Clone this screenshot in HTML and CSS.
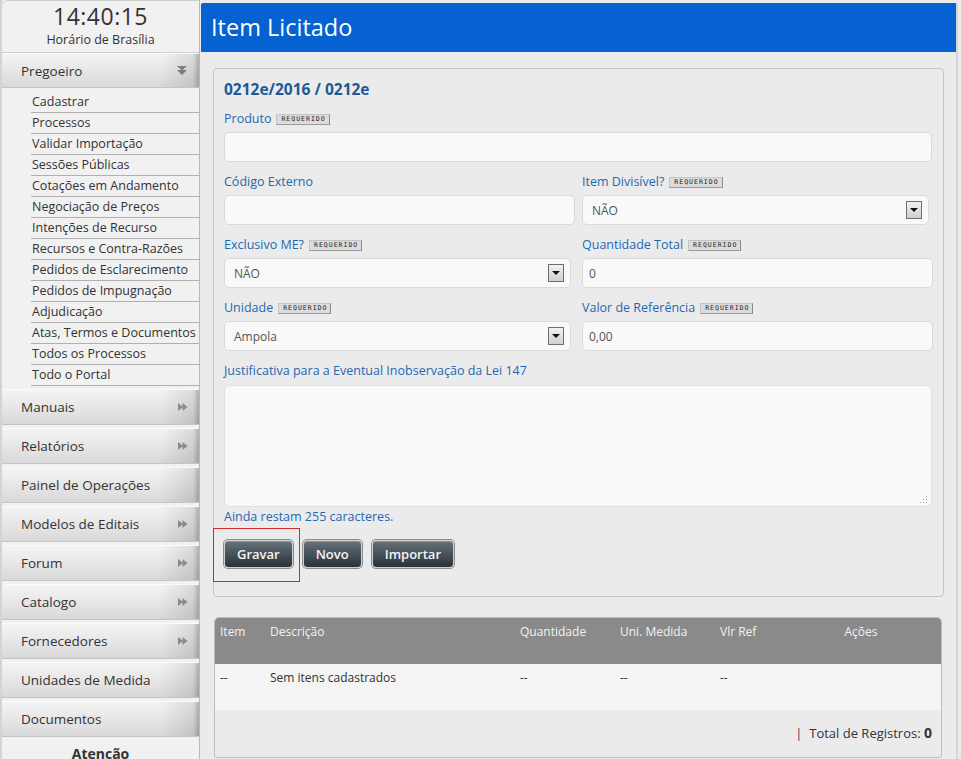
FILE: index.html
```html
<!DOCTYPE html>
<html lang="pt-BR">
<head>
<meta charset="utf-8">
<title>Item Licitado</title>
<link rel="stylesheet" href="styles.css">
</head>
<body>
<div class="page">
  <aside class="sidebar">
    <div class="clock">
      <div class="time">14:40:15</div>
      <div class="zone">Horário de Brasília</div>
    </div>
    <div class="menu-item open">
      <span>Pregoeiro</span>
      <svg class="ico" width="12" height="11" viewBox="0 0 12 11"><path d="M1 1h10L6 5.5z M1 5h10L6 10z" fill="#7d7d7d"/></svg>
    </div>
    <ul class="submenu">
      <li>Cadastrar</li>
      <li>Processos</li>
      <li>Validar Importação</li>
      <li>Sessões Públicas</li>
      <li>Cotações em Andamento</li>
      <li>Negociação de Preços</li>
      <li>Intenções de Recurso</li>
      <li>Recursos e Contra-Razões</li>
      <li>Pedidos de Esclarecimento</li>
      <li>Pedidos de Impugnação</li>
      <li>Adjudicação</li>
      <li>Atas, Termos e Documentos</li>
      <li>Todos os Processos</li>
      <li>Todo o Portal</li>
    </ul>
    <div class="menu-item"><span>Manuais</span><svg class="ico" width="11" height="10" viewBox="0 0 11 10"><path d="M1 1v8l5-4z M5.5 1v8l5-4z" fill="#8a8a8a"/></svg></div>
    <div class="menu-item"><span>Relatórios</span><svg class="ico" width="11" height="10" viewBox="0 0 11 10"><path d="M1 1v8l5-4z M5.5 1v8l5-4z" fill="#8a8a8a"/></svg></div>
    <div class="menu-item"><span>Painel de Operações</span></div>
    <div class="menu-item"><span>Modelos de Editais</span><svg class="ico" width="11" height="10" viewBox="0 0 11 10"><path d="M1 1v8l5-4z M5.5 1v8l5-4z" fill="#8a8a8a"/></svg></div>
    <div class="menu-item"><span>Forum</span><svg class="ico" width="11" height="10" viewBox="0 0 11 10"><path d="M1 1v8l5-4z M5.5 1v8l5-4z" fill="#8a8a8a"/></svg></div>
    <div class="menu-item"><span>Catalogo</span><svg class="ico" width="11" height="10" viewBox="0 0 11 10"><path d="M1 1v8l5-4z M5.5 1v8l5-4z" fill="#8a8a8a"/></svg></div>
    <div class="menu-item"><span>Fornecedores</span><svg class="ico" width="11" height="10" viewBox="0 0 11 10"><path d="M1 1v8l5-4z M5.5 1v8l5-4z" fill="#8a8a8a"/></svg></div>
    <div class="menu-item"><span>Unidades de Medida</span></div>
    <div class="menu-item"><span>Documentos</span></div>
    <div class="attention">Atenção</div>
  </aside>

  <main class="main">
    <header class="title-bar"><h1>Item Licitado</h1></header>

    <section class="panel form-panel">
      <h2 class="proc">0212e/2016 / 0212e</h2>

      <div class="field first">
        <label>Produto <span class="req">REQUERIDO</span></label>
        <div class="input"></div>
      </div>

      <div class="row">
        <div class="field">
          <label>Código Externo</label>
          <div class="input"></div>
        </div>
        <div class="field">
          <label>Item Divisível? <span class="req">REQUERIDO</span></label>
          <div class="select"><span>NÃO</span><i class="arrow"></i></div>
        </div>
      </div>

      <div class="row">
        <div class="field">
          <label>Exclusivo ME? <span class="req">REQUERIDO</span></label>
          <div class="select"><span>NÃO</span><i class="arrow"></i></div>
        </div>
        <div class="field">
          <label>Quantidade Total <span class="req">REQUERIDO</span></label>
          <div class="input"><span>0</span></div>
        </div>
      </div>

      <div class="row">
        <div class="field">
          <label>Unidade <span class="req">REQUERIDO</span></label>
          <div class="select"><span>Ampola</span><i class="arrow"></i></div>
        </div>
        <div class="field">
          <label>Valor de Referência <span class="req">REQUERIDO</span></label>
          <div class="input"><span>0,00</span></div>
        </div>
      </div>

      <div class="field just">
        <label>Justificativa para a Eventual Inobservação da Lei 147</label>
        <div class="textarea"><i class="grip"></i></div>
      </div>
      <div class="remaining">Ainda restam 255 caracteres.</div>

      <div class="buttons">
        <button class="btn">Gravar</button>
        <button class="btn">Novo</button>
        <button class="btn">Importar</button>
        <div class="focus-mark"></div>
      </div>
    </section>

    <section class="table-panel">
      <div class="trow thead">
        <div class="c1">Item</div><div class="c2">Descrição</div><div class="c3">Quantidade</div><div class="c4">Uni. Medida</div><div class="c5">Vlr Ref</div><div class="c6">Ações</div>
      </div>
      <div class="trow tbody">
        <div class="c1">--</div><div class="c2">Sem itens cadastrados</div><div class="c3">--</div><div class="c4">--</div><div class="c5">--</div><div class="c6"></div>
      </div>
      <div class="tfoot"><span class="sep">|</span> &nbsp;Total de Registros: <b>0</b></div>
    </section>
  </main>
</div>
</body>
</html>
```

FILE: styles.css
```css
* { box-sizing: border-box; }
html, body { margin: 0; padding: 0; }
body {
  background: #ebebeb;
  font-family: "Open Sans", "Noto Sans", sans-serif;
  color: #333;
  height: 759px;
  overflow: hidden;
}
.page {
  display: flex;
  align-items: flex-start;
  height: 759px;
  border-left: 2px solid #d4d4d4;
}

/* sidebar */
.sidebar {
  width: 198px;
  flex: none;
  background: #f1f1f1;
  border-right: 1px solid #b9b9b9;
  min-height: 759px;
  border-top-left-radius: 6px;
  box-shadow: inset 0 1px 0 #d0d0d0;
}
.clock {
  height: 53px;
  text-align: center;
  padding-top: 2px;
  border-bottom: 1px solid #cfcfcf;
}
.clock .time { font-size: 23px; line-height: 29px; color: #333; letter-spacing: 0.5px; }
.clock .zone { font-size: 12.5px; line-height: 18px; color: #333; }

.menu-item {
  height: 36px;
  display: flex;
  align-items: center;
  justify-content: space-between;
  padding: 0 11px 0 19px;
  font-size: 13.5px;
  color: #333;
  background: linear-gradient(to right, rgba(255,255,255,0) 80%, rgba(0,0,0,0.10) 97%, rgba(0,0,0,0.28) 100%),
              linear-gradient(to bottom, #f4f4f4 0%, #e4e4e4 60%, #d8d8d8 100%);
  border-top: 1px solid #fbfbfb;
  border-bottom: 1px solid #c4c4c4;
  margin-bottom: 3px;
}
.menu-item.open { height: 35px; }
.menu-item .ico { flex: none; }

.submenu {
  list-style: none;
  margin: 4px 0 3px 0;
  padding: 0 0 0 29px;
}
.submenu li {
  height: 21px;
  line-height: 20px;
  font-size: 12.5px;
  color: #333;
  padding-left: 1px;
  border-bottom: 1px solid #b0b0b0;
  white-space: nowrap;
}
.attention {
  text-align: center;
  font-weight: bold;
  font-size: 14px;
  padding-top: 4px;
  color: #333;
}

/* main */
.main {
  width: 757px;
  flex: none;
  margin-left: 1px;
  margin-top: 3px;
  border-right: 2px solid #d6d6d6;
  min-height: 756px;
}
.title-bar {
  height: 49px;
  background: #0562d0;
  display: flex;
  align-items: center;
  padding-left: 10px;
  border-top-left-radius: 2px;
}
.title-bar h1 {
  margin: 0;
  font-weight: normal;
  font-size: 23.5px;
  color: #fff;
  line-height: 1;
}

.panel {
  margin: 16px 12px 0 12px;
  border: 1px solid #c5c5c5;
  border-radius: 4px;
  background: #ebebeb;
}
.form-panel {
  padding: 11px 11px 0 10px;
  height: 529px;
}
.proc {
  margin: 0;
  font-size: 15.5px;
  font-weight: bold;
  color: #1c5a98;
  line-height: 18px;
}
.row {
  display: grid;
  grid-template-columns: 351px 351px;
  column-gap: 7px;
}
.field label {
  display: flex;
  align-items: center;
  gap: 4px;
  color: #1d68b3;
  font-size: 12.5px;
  line-height: 16px;
  height: 16px;
}
.field.first > label { margin-top: 13px; margin-bottom: 5px; }
.row .field > label { margin-top: 12px; margin-bottom: 5px; }
.field.just > label { margin-top: 12px; margin-bottom: 6px; }
.req {
  display: inline-block;
  font-family: "DejaVu Sans Mono", monospace;
  font-size: 6.5px;
  line-height: 9px;
  letter-spacing: 1px;
  color: #222;
  background: #dcdcdc;
  border: 1px solid #c4c4c4;
  border-right-color: #8a8a8a;
  border-bottom-color: #9a9a9a;
  padding: 0 3px 0 4px;
  height: 11px;
  margin-left: 1px;
}
.input, .select, .textarea {
  background: #f9f9f9;
  border: 1px solid #dadada;
  border-radius: 5px;
  height: 30px;
  display: flex;
  align-items: center;
  padding: 0 9px;
  font-size: 12px;
  color: #555;
}
.input span { margin-left: -3px; }
.select {
  width: 347px;
  justify-content: space-between;
  padding-right: 6px;
}
.select .arrow {
  width: 16px;
  height: 18px;
  border: 1px solid #6e6e6e;
  background: linear-gradient(to bottom, #f2f2f2, #cfcfcf);
  position: relative;
}
.select .arrow::after {
  content: "";
  position: absolute;
  left: 3px;
  top: 6px;
  border-left: 4px solid transparent;
  border-right: 4px solid transparent;
  border-top: 4px solid #111;
}
.textarea {
  height: 122px;
  position: relative;
  border-color: #e0e0e0;
}
.grip {
  position: absolute;
  right: 4px;
  bottom: 3px;
  width: 8px;
  height: 8px;
  background: radial-gradient(circle, #999 0.7px, transparent 0.8px) 0 0 / 3px 3px;
  clip-path: polygon(100% 0, 100% 100%, 0 100%);
}
.remaining {
  color: #1d68b3;
  font-size: 12.5px;
  line-height: 16px;
  margin-top: 2px;
}
.buttons {
  display: flex;
  gap: 10px;
  margin-top: 15px;
  position: relative;
}
.btn {
  height: 28px;
  padding: 0 12px;
  font-family: "Open Sans", "Noto Sans", sans-serif;
  font-size: 13px;
  font-weight: 600;
  color: #f4f4f4;
  background: linear-gradient(to bottom, #67727b 0%, #4a555d 45%, #2b3237 100%);
  border: 1px solid #cfcfcf;
  border-radius: 4px;
  box-shadow: 0 0 0 1px #8c8c8c, inset 0 1px 0 rgba(255,255,255,0.25);
}
.focus-mark {
  position: absolute;
  left: -11px;
  top: -12px;
  width: 87px;
  height: 54px;
  border: 1px solid #d0292e;
  background: transparent;
  pointer-events: none;
  z-index: 2;
}

.table-panel {
  margin: 20px 14px 0 13px;
  border: 1px solid #bdbdbd;
  border-radius: 5px 5px 3px 3px;
  overflow: hidden;
  background: #ebebeb;
}
.trow {
  display: flex;
  height: 46px;
  font-size: 12px;
}
.thead { background: #8a8a8a; color: #f2f2f2; padding-top: 5px; }
.tbody { background: #f4f4f4; color: #333; padding-top: 5px; }
.c1 { width: 55px; padding-left: 5px; }
.c2 { width: 250px; }
.c3 { width: 100px; }
.c4 { width: 100px; }
.c5 { width: 100px; }
.c6 { width: 82px; text-align: center; }
.tfoot {
  height: 47px;
  text-align: right;
  padding: 13px 9px 0 0;
  font-size: 13px;
  color: #333;
}
.tfoot .sep { color: #444; }
.tfoot b { font-size: 14px; }
```
